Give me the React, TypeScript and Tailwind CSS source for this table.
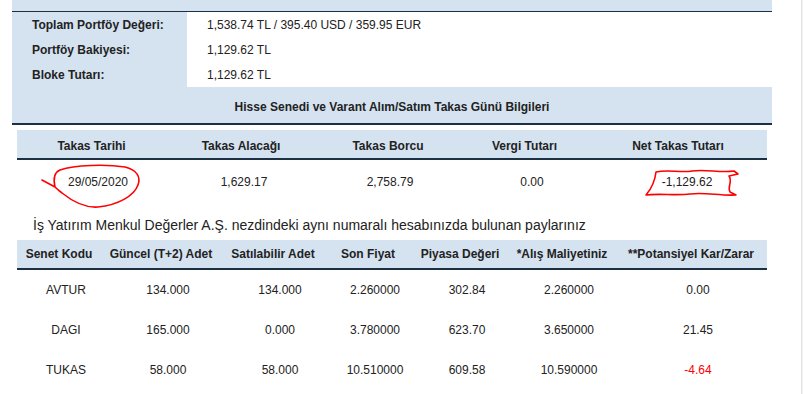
import React from 'react';

const font = { fontFamily: '"Liberation Sans", Arial, sans-serif' };

const summary = [
  { label: 'Toplam Portföy Değeri:', value: '1,538.74 TL / 395.40 USD / 359.95 EUR' },
  { label: 'Portföy Bakiyesi:', value: '1,129.62 TL' },
  { label: 'Bloke Tutarı:', value: '1,129.62 TL' },
];

const takasCols = [
  { title: 'Takas Tarihi', w: 'w-[149px]', pad: 'pl-[13px]', value: '29/05/2020' },
  { title: 'Takas Alacağı', w: 'w-[150px]', pad: 'pl-[6px]', value: '1,629.17' },
  { title: 'Takas Borcu', w: 'w-[144px]', pad: 'pl-[4px]', value: '2,758.79' },
  { title: 'Vergi Tutarı', w: 'w-[129px]', pad: 'pl-[15px]', value: '0.00' },
  { title: 'Net Takas Tutarı', w: 'w-[178px]', pad: 'pl-[18px]', value: '-1,129.62' },
];

const stockCols = [
  { title: 'Senet Kodu', w: 'w-[84px]' },
  { title: 'Güncel (T+2) Adet', w: 'w-[120px]' },
  { title: 'Satılabilir Adet', w: 'w-[104px]' },
  { title: 'Son Fiyat', w: 'w-[86px]' },
  { title: 'Piyasa Değeri', w: 'w-[98px]' },
  { title: '*Alış Maliyetiniz', w: 'w-[106px]' },
  { title: '**Potansiyel Kar/Zarar', w: 'w-[152px]' },
];

const stocks = [
  ['AVTUR', '134.000', '134.000', '2.260000', '302.84', '2.260000', '0.00'],
  ['DAGI', '165.000', '0.000', '3.780000', '623.70', '3.650000', '21.45'],
  ['TUKAS', '58.000', '58.000', '10.510000', '609.58', '10.590000', '-4.64'],
];

export default function App() {
  return (
    <div className="relative flex w-[803px] h-[394px] overflow-hidden bg-white text-[#222]" style={font}>
      <div className="w-[801px] pl-[12px]">
        {/* Portföy özeti */}
        <div className="w-[760px] bg-[#d5e3f1] pt-[11px]">
          <div className="border-t border-[#1b3042]">
            {summary.map(s => (
              <div key={s.label} className="flex h-[25px] items-center">
                <div className="w-[175px] pl-[20px] text-[12px] font-bold">{s.label}</div>
                <div className="flex-1 h-full flex items-center bg-white pl-[20px] text-[12px]">{s.value}</div>
              </div>
            ))}
          </div>
          <div className="h-[38px] pt-[3px] flex items-center justify-center text-[12px] font-bold border-b-2 border-[#1b3042]">
            Hisse Senedi ve Varant Alım/Satım Takas Günü Bilgileri
          </div>
        </div>

        {/* Takas tablosu */}
        <div className="ml-[5px] mt-[5px] w-[750px]">
          <div className="flex h-[30px] pt-[3px] items-center bg-[#d5e3f1] border-b-2 border-[#1b3042]">
            {takasCols.map(c => (
              <div key={c.title} className={`${c.w} text-center text-[12px] font-bold`}>{c.title}</div>
            ))}
          </div>
          <div className="flex h-[40px] pt-[3px] items-center">
            {takasCols.map(c => (
              <div key={c.title} className={`${c.w} ${c.pad} text-center text-[12px]`}>{c.value}</div>
            ))}
          </div>
          <p className="mt-[15px] mb-[5px] pl-[16px] h-[20px] leading-[20px] text-[14px]">
            İş Yatırım Menkul Değerler A.Ş. nezdindeki aynı numaralı hesabınızda bulunan paylarınız
          </p>

          {/* Paylar tablosu */}
          <div className="flex h-[30px] items-center bg-[#d5e3f1] border-b-2 border-[#1b3042]">
            {stockCols.map(c => (
              <div key={c.title} className={`${c.w} text-center text-[12px] font-bold whitespace-nowrap`}>{c.title}</div>
            ))}
          </div>
          {stocks.map(row => (
            <div key={row[0]} className="flex h-[40px] items-center">
              {row.map((v, i) => (
                <div key={i}
                  className={`${stockCols[i].w} pl-[14px] text-center text-[12px] ${v.startsWith('-') ? 'text-[#ff0000]' : ''}`}>
                  {v}
                </div>
              ))}
            </div>
          ))}
        </div>
      </div>

      {/* scrollbar izi */}
      <div className="w-[2px] h-full bg-[#f1f1f1] border-l border-[#e4e4e4]" />

      {/* kırmızı el çizimi işaretler */}
      <svg className="absolute left-0 top-0 pointer-events-none" width="803" height="394">
        <path
          d="M42 180 L55 187 C53 178 55 172 60 170 C75 165 105 164 125 167 C137 170 141 177 138 185 C134 196 118 205 98 207 C84 208 72 201 62 193 C58 190 56 188 55 187"
          fill="none" stroke="#ff0000" strokeWidth="1.6" strokeLinecap="round" strokeLinejoin="round" />
        <path
          d="M656 172 C668 169 680 173 692 171 C706 169 720 173 734 171 L738 174 L729 176 C733 182 727 186 730 192 L736 195 C720 196 705 192 690 194 C675 196 660 193 646 195 C652 188 655 181 656 172 Z"
          fill="none" stroke="#ff0000" strokeWidth="1.6" strokeLinecap="round" strokeLinejoin="round" />
      </svg>
    </div>
  );
}
